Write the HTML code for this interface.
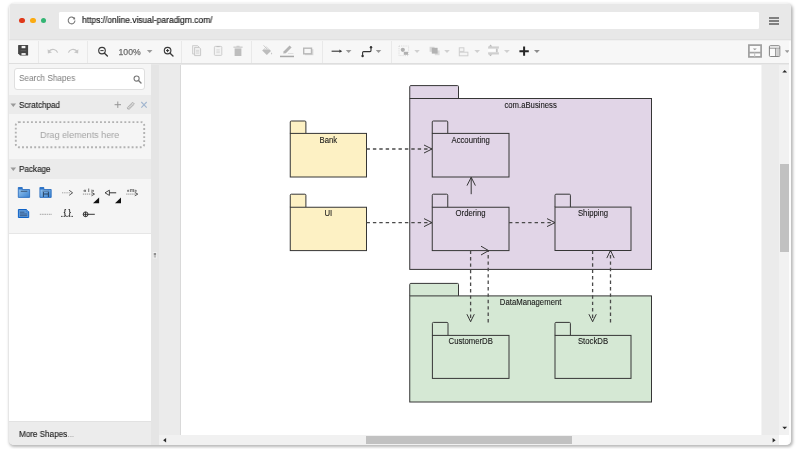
<!DOCTYPE html>
<html><head><meta charset="utf-8"><title>Visual Paradigm Online</title>
<style>
*{box-sizing:border-box;margin:0;padding:0}
html,body{width:800px;height:449px;background:#fff;overflow:hidden;font-family:"Liberation Sans",sans-serif}
.abs{position:absolute}
svg,.cx,.htxt,#urltxt{will-change:transform}
#win{position:absolute;left:8.5px;top:2.5px;width:782px;height:442px;border-radius:5px;background:#e8e8e8;overflow:hidden}
#shadow{position:absolute;left:8.5px;top:2.5px;width:782px;height:442px;border-radius:5px;box-shadow:1.2px 1.6px 3px 0.3px rgba(0,0,0,.28)}
#titlebar{left:0;top:0;width:782px;height:37.8px;background:#e8e8e8;border-top:1.5px solid #f3f3f3;border-left:1.3px solid #f1f1f1;border-bottom:1px solid #e1e1e1}
.dot{position:absolute;width:5.8px;height:5.8px;border-radius:50%;top:15.2px}
#url{left:50.2px;top:9.9px;width:700px;height:16.2px;background:#fff;border-radius:1.2px}
#urltxt{left:73.1px;top:12.8px;font-size:8.95px;line-height:10px;color:#242424;white-space:nowrap;-webkit-text-stroke:.2px #242424;transform:scaleX(.945);transform-origin:0 50%}
#toolbar{left:0;top:37.8px;width:782px;height:24.2px;background:#f7f7f7;border-top:1px solid #f1f1f1;border-bottom:1.8px solid #dedede}
.sep{position:absolute;top:38.8px;width:1px;height:21.4px;background:#e9e9e9}
#sidebar{left:0;top:62px;width:142px;height:381px;background:#fff}
.hdr{position:absolute;left:0;width:142px;background:#ebebeb;font-size:8.1px;color:#1c1c1c;-webkit-text-stroke:.14px #1c1c1c}
.tri{position:absolute;width:0;height:0;border-left:2.9px solid transparent;border-right:2.9px solid transparent;border-top:3.2px solid #969696}
#splitter{left:142px;top:62px;width:8.5px;height:381px;background:#e5e5e5}
#canvas{left:150.5px;top:62px;width:620px;height:371px;background:#ebebeb}
#page{left:171.6px;top:62px;width:582.4px;height:371px;background:#fff;border-left:1.5px solid #d9d9d9;border-right:1.5px solid #f4f4f4}
#vscroll{left:770.5px;top:62px;width:11.5px;height:371px;background:#f1f1f1}
#hscroll{left:150.5px;top:432.4px;width:620px;height:10px;background:#f1f1f1}
#corner{left:770.5px;top:432.4px;width:12px;height:10px;background:#fff}
.thumb{position:absolute;background:#c1c1c1}
.lbl{position:absolute;font-size:7.75px;line-height:9px;color:#1a1a1a;white-space:nowrap;text-align:center;-webkit-text-stroke:.12px #1a1a1a}
.htxt{font-size:8.65px;line-height:10px;color:#1c1c1c;white-space:nowrap;-webkit-text-stroke:.14px #1c1c1c;transform:scaleX(.94);transform-origin:0 50%}
.cx{white-space:nowrap;transform:scaleX(.94);transform-origin:0 50%}
</style></head><body>
<div id="shadow"></div>
<div id="win">
 <div id="titlebar" class="abs"></div>
 <div class="dot" style="left:10.8px;background:#e0391a"></div>
 <div class="dot" style="left:21.5px;background:#fbab12"></div>
 <div class="dot" style="left:32px;background:#33b573"></div>
 <div id="url" class="abs"></div>
 <svg class="abs" style="left:58.5px;top:13.5px" width="9.2" height="9.2" viewBox="0 0 10 10"><path d="M8.3 3.2A3.7 3.7 0 1 0 8.7 5" fill="none" stroke="#757575" stroke-width="1.15"/><path d="M6.3 3.6L8.9 3.8L8.7 1.2Z" fill="#757575"/></svg>
 <div id="urltxt" class="abs">https://online.visual-paradigm.com/</div>
 <div class="abs" style="left:760.4px;top:14.4px;width:10.2px;height:1.9px;background:#808080"></div>
 <div class="abs" style="left:760.4px;top:17.5px;width:10.2px;height:1.9px;background:#808080"></div>
 <div class="abs" style="left:760.4px;top:20.5px;width:10.2px;height:1.9px;background:#808080"></div>

 <div id="toolbar" class="abs"></div>
 <div class="sep" style="left:29.5px"></div>
 <div class="sep" style="left:78.6px"></div>
 <div class="sep" style="left:172.6px"></div>
 <div class="sep" style="left:242.8px"></div>
 <div class="sep" style="left:313.5px"></div>
 <div class="sep" style="left:382px"></div>
 <!--TB_START--><svg class="abs" style="left:-8.5px;top:-2.5px" width="800" height="70" viewBox="0 0 800 70"><path d="M18.1 45.6Q18.1 45.1 18.6 45.1H27.6Q28.1 45.1 28.1 45.6V55Q28.1 55.5 27.6 55.5H20.1L18.1 53.5Z" fill="#454545"/>
<rect x="21.6" y="45.9" width="3.8" height="2.3" fill="#f4f4f4"/><rect x="21.5" y="53.1" width="4.2" height="1.8" fill="#f4f4f4"/><rect x="20.6" y="50" width="5.6" height="1.2" fill="#5a5a5a"/>
<path d="M57.6 52.6C56.6 49.4 52 48 49 51.2" fill="none" stroke="#c6c6c6" stroke-width="1.2"/><path d="M47.6 49.2L47.9 53.4L52 52.6Z" fill="#c6c6c6"/>
<path d="M68.4 52.6C69.4 49.4 74 48 77 51.2" fill="none" stroke="#c6c6c6" stroke-width="1.2"/><path d="M78.4 49.2L78.1 53.4L74 52.6Z" fill="#c6c6c6"/>
<circle cx="102" cy="50.6" r="3.3" fill="none" stroke="#3a3a3a" stroke-width="1.15"/><path d="M104.5 53.2L107.4 56" stroke="#3a3a3a" stroke-width="1.35" stroke-linecap="round"/><path d="M100.4 50.6H103.6" stroke="#333" stroke-width="1"/>
<text x="118.5" y="55.4" font-family="Liberation Sans, sans-serif" font-size="9.7" fill="#6a6a6a" stroke="#6a6a6a" stroke-width=".25" textLength="22.2" lengthAdjust="spacingAndGlyphs">100%</text>
<path d="M146.9 50.1H152.5L149.7 53.1Z" fill="#9a9a9a"/>
<circle cx="167.6" cy="50.6" r="3.3" fill="none" stroke="#3a3a3a" stroke-width="1.15"/><path d="M170.1 53.2L173 56" stroke="#3a3a3a" stroke-width="1.35" stroke-linecap="round"/><path d="M166 50.6H169.2M167.6 49V52.2" stroke="#333" stroke-width="1"/>
<path d="M192.6 45.6H197.6L199 47V54H192.6Z" fill="#f2f2f2" stroke="#c9c9c9" stroke-width=".9"/><path d="M194.6 47.4H199.2L200.6 48.8V55.6H194.6Z" fill="#f0f0f0" stroke="#c4c4c4" stroke-width=".9"/><path d="M196 50.4H199.2M196 51.8H199.2M196 53.2H199.2" stroke="#d0d0d0" stroke-width=".7"/>
<rect x="214.4" y="46.4" width="7.4" height="9" rx=".8" fill="#f3f3f3" stroke="#c9c9c9" stroke-width=".9"/><path d="M216.6 46.6H219.6" stroke="#bdbdbd" stroke-width="1"/><path d="M216.4 49.8H219.8M216.4 51.2H219.8M216.4 52.6H219.8" stroke="#d2d2d2" stroke-width=".7"/>
<rect x="234.6" y="48.4" width="6.8" height="7.6" fill="#bdbdbd"/><rect x="233.4" y="46.6" width="9.2" height="1.1" fill="#c4c4c4"/><rect x="236.4" y="45.8" width="3.2" height="1" fill="#c8c8c8"/>
<path d="M266.6 46.6L271 51L266.8 55L262.2 50.6Z" fill="#bcbcbc"/><path d="M263.6 49.4L266.6 46.6L269.6 49.6Z" fill="#ececec"/><path d="M263.6 45.4L267.4 49.2" stroke="#bcbcbc" stroke-width=".8"/><path d="M271.6 52.2Q272.8 53.8 271.6 54.6Q270.4 53.8 271.6 52.2Z" fill="#bcbcbc"/>
<path d="M283.2 53.4L283.8 51.2L289.6 45.4L291.6 47.4L285.8 53.2Z" fill="#b4b4b4"/><rect x="280" y="55.7" width="14" height="1.5" fill="#a8a8a8"/><rect x="288" y="53.2" width="5.4" height=".7" fill="#d4d4d4"/>
<rect x="304.8" y="49.2" width="8.6" height="6" fill="#d9d9d9"/><rect x="303.7" y="48.2" width="7.8" height="5.6" fill="#f7f7f7" stroke="#b8b8b8" stroke-width="1.4"/>
<path d="M331.6 51.2H339.8" stroke="#333" stroke-width="1.1"/><path d="M339.4 49.6L342.2 51.2L339.4 52.8Z" fill="#333"/>
<path d="M345.8 50.1H351.5L348.65 53.1Z" fill="#9a9a9a"/>
<path d="M362.6 55.6V52.6Q362.6 51.6 363.6 51.6H370Q371 51.6 371 50.6V47.4" fill="none" stroke="#333" stroke-width="1.1"/><circle cx="362.6" cy="56" r="1.2" fill="#333"/><circle cx="371" cy="47.2" r="1.2" fill="#333"/>
<path d="M375.8 50.1H381.3L378.55 53.1Z" fill="#9a9a9a"/>
<rect x="399" y="46" width="9.6" height="9.6" fill="none" stroke="#d4d4d4" stroke-width=".9" stroke-dasharray="1 1.2"/><circle cx="402.8" cy="49.8" r="2.1" fill="#b0b0b0"/><rect x="403.8" y="51.8" width="4.2" height="3" fill="#b0b0b0"/>
<path d="M414.3 50.1H419.8L417.05 53.1Z" fill="#d0d0d0"/>
<rect x="429.6" y="46.8" width="5" height="5" fill="#d8d8d8"/><rect x="434.8" y="50.4" width="4.8" height="4.8" fill="#dcdcdc"/><rect x="431.8" y="47.8" width="5.8" height="5.8" fill="#b2b2b2"/>
<path d="M444.2 50.1H449.8L447.0 53.1Z" fill="#d0d0d0"/>
<rect x="459.3" y="47.8" width="4.6" height="3.6" fill="#f4f4f4" stroke="#cfcfcf" stroke-width="1"/><rect x="459.3" y="52.2" width="8.6" height="3.6" fill="#f4f4f4" stroke="#cfcfcf" stroke-width="1"/>
<path d="M474.4 50.1H480L477.2 53.1Z" fill="#d0d0d0"/>
<rect x="488.1" y="46.4" width="10.8" height="2.2" fill="#cfcfcf"/><rect x="488.1" y="52.3" width="10.8" height="2.2" fill="#cfcfcf"/><rect x="495.9" y="48.6" width="1.8" height="3.7" fill="#c4c4c4"/><rect x="488.1" y="49.5" width="7.4" height="1.9" fill="#fdfdfd"/><path d="M489 46.4L490.6 44.4L492.2 46.4ZM488.8 54.5H492.2L490.5 56.2Z" fill="#b8b8b8"/>
<path d="M504 50.1H509.8L506.9 53.1Z" fill="#d0d0d0"/>
<path d="M519.4 51.2H528.8M524.1 46.6V55.8" stroke="#262626" stroke-width="2"/>
<path d="M534 50.1H539.8L536.9 53.1Z" fill="#8c8c8c"/>
<rect x="748.9" y="45.1" width="12.2" height="11.8" fill="#fbfbfb" stroke="#9e9e9e" stroke-width="1.7"/><path d="M749 52.6H761" stroke="#a4a4a4" stroke-width="1.7"/><path d="M754.7 52.4V57" stroke="#bdbdbd" stroke-width="1"/><path d="M752.8 48.4H756.8L754.8 50.2Z" fill="#9a9a9a"/>
<rect x="769.4" y="45.7" width="10.4" height="10.8" rx="1" fill="#fafafa" stroke="#757575" stroke-width=".9"/><path d="M769.4 48.2H779.8" stroke="#757575" stroke-width=".8"/><path d="M775.6 48.2V56.4" stroke="#757575" stroke-width=".8"/><rect x="776.2" y="48.8" width="3" height="7.2" fill="#cfcfcf"/>
<path d="M784.8 50.2H789.6L787.2 53Z" fill="#9a9a9a"/></svg><!--TB_END-->

 <div id="sidebar" class="abs"></div>
 <!--SIDEBAR_START-->
<div class="abs" id="L" style="left:-8.5px;top:-2.5px;width:800px;height:449px">
 <div class="abs" style="left:8.5px;top:64px;width:142px;height:31px;background:#f5f5f5"></div>
 <div class="abs" style="left:14.4px;top:68.2px;width:130.4px;height:21.6px;background:#fff;border:1px solid #dfdfdf;border-radius:3px"></div>
 <div class="abs cx" style="left:19.4px;top:73.2px;color:#7c7c7c;font-size:8.75px;line-height:10px">Search Shapes</div>
 <svg class="abs" style="left:132.7px;top:74.7px" width="10" height="10" viewBox="0 0 10 10"><circle cx="3.6" cy="3.6" r="2.55" fill="none" stroke="#787878" stroke-width="1.1"/><path d="M5.5 5.5L8 8" stroke="#787878" stroke-width="1.4" stroke-linecap="round"/></svg>

 <div class="abs" style="left:8.5px;top:95px;width:142px;height:19.4px;background:#ebebeb"></div>
 <svg class="abs" style="left:10px;top:102px" width="8" height="6" viewBox="0 0 8 6"><path d="M.5 1.6H6.1L3.3 4.9Z" fill="#9a9a9a"/></svg>
 <div class="abs htxt" style="left:18.8px;top:100.2px">Scratchpad</div>
 <svg class="abs" style="left:113px;top:99px" width="36" height="12" viewBox="0 0 36 12">
  <path d="M1.6 5.7H8M4.8 2.5V8.9" stroke="#969696" stroke-width="1" fill="none"/>
  <path d="M15.2 9.3L14.6 9.9L14.4 8.5L19.6 3.2L21.4 5L16.2 10.2L14.6 9.9" fill="#d6d6d6" stroke="#a8a8a8" stroke-width=".8" stroke-linejoin="round"/>
  <path d="M16 7.6L17.4 9M17.2 6.4L18.6 7.8M18.4 5.2L19.8 6.6" stroke="#aaa" stroke-width=".6"/>
  <path d="M28.3 3L33.7 8.6M33.7 3L28.3 8.6" stroke="#a2b6cf" stroke-width="1.1" fill="none"/>
 </svg>
 <div class="abs" style="left:8.5px;top:114.4px;width:142px;height:44.6px;background:#f5f5f5"></div>
 <svg class="abs" style="left:12px;top:119px" width="136" height="32" viewBox="0 0 136 32"><rect x="3.8" y="3.1" width="128.4" height="25.1" rx="3" fill="none" stroke="#b2b2b2" stroke-width="1.9" stroke-dasharray="1.9 2.16"/></svg>
 <div class="abs cx" style="left:40.1px;top:128.8px;color:#a4a4a4;font-size:9.6px;line-height:11px">Drag elements here</div>

 <div class="abs" style="left:8.5px;top:159px;width:142px;height:19.5px;background:#ebebeb"></div>
 <svg class="abs" style="left:10px;top:165.6px" width="8" height="6" viewBox="0 0 8 6"><path d="M.5 1.6H6.1L3.3 4.9Z" fill="#9a9a9a"/></svg>
 <div class="abs htxt" style="left:19.4px;top:164px">Package</div>
 <div class="abs" style="left:8.5px;top:178.5px;width:142px;height:55.5px;background:#f5f5f5;border-bottom:1.3px solid #e6e6e6"></div>
 <!--PAL_START--><svg class="abs" style="left:0;top:180px" width="160" height="50" viewBox="0 180 160 50"><defs>
<linearGradient id="gb" x1="0" y1="0" x2="1" y2="1"><stop offset="0" stop-color="#9ccaf2"/><stop offset="1" stop-color="#3a82d0"/></linearGradient>
</defs>
<path d="M18.3 187.5H22.2V189.5H29.6V197.4H18.3Z" fill="url(#gb)" stroke="#1f66bd" stroke-width=".8" stroke-linejoin="round"/><rect x="18.3" y="187.4" width="4" height="2.1" fill="#2a72c8"/>
<path d="M20.8 191.3H27.3" stroke="#3d5a7c" stroke-width="1.05"/>
<path d="M39.9 187.5H43.8V189.5H51.2V197.4H39.9Z" fill="url(#gb)" stroke="#1f66bd" stroke-width=".8" stroke-linejoin="round"/><rect x="39.9" y="187.4" width="4" height="2.1" fill="#2a72c8"/>
<path d="M42.6 191.2H49" stroke="#47648a" stroke-width=".8"/><path d="M43.4 192V197M48.4 192V197M43.4 194H48.4" stroke="#2a4666" stroke-width="1" fill="none"/>
<path d="M62 192.8H70" stroke="#9a9a9a" stroke-width=".9" stroke-dasharray="1.3 .9"/><path d="M69.2 190.3L72.6 192.8L69.2 195.3" fill="none" stroke="#444" stroke-width=".9"/>
<text x="89.45" y="192.1" text-anchor="middle" font-family="Liberation Sans, sans-serif" font-size="5.6" font-weight="bold" letter-spacing="1.5" fill="#4a4a4a">«i»</text><path d="M82.9 194.1H92.5" stroke="#8a8a8a" stroke-width=".9" stroke-dasharray="1.3 .7"/><path d="M91.5 192.4L94.5 194.1L91.5 195.8" fill="none" stroke="#444" stroke-width=".9"/>
<path d="M99.1 197.6V203.2H93Z" fill="#111"/>
<path d="M109.4 190.2V195.4L105 192.8Z" fill="#fafafa" stroke="#333" stroke-width=".9"/><path d="M109.4 192.8H116.2" stroke="#333" stroke-width="1"/>
<path d="M121 197.6V203.2H115Z" fill="#111"/>
<text x="132.15" y="192.3" text-anchor="middle" font-family="Liberation Sans, sans-serif" font-size="4.6" font-weight="bold" letter-spacing="0.3" fill="#4a4a4a">«m»</text><path d="M126.2 194.1H135.8" stroke="#8a8a8a" stroke-width=".9" stroke-dasharray="1.3 .7"/><path d="M134.8 192.4L137.8 194.1L134.8 195.8" fill="none" stroke="#444" stroke-width=".9"/>
<path d="M18.4 209.5H26.4L28.7 211.7V217.5H18.4Z" fill="#5b97d8" stroke="#0f62c6" stroke-width="1" stroke-linejoin="round"/><path d="M26.4 209.5V211.7H28.7" fill="#a8ccf0" stroke="#0f62c6" stroke-width=".6"/><path d="M20 212.2H24.4M20 214H27.2M20 215.7H27.2" stroke="#3c5f8c" stroke-width="1"/>
<path d="M39.8 214.3H52" stroke="#a6a6a6" stroke-width="1" stroke-dasharray="1.6 .7"/>
<text x="68.6" y="213.9" text-anchor="middle" font-family="Liberation Sans, sans-serif" font-size="7" fill="#222" stroke="#222" stroke-width=".25" letter-spacing="2.6">{}</text><path d="M61 216.4H73.8" stroke="#333" stroke-width=".9" stroke-dasharray="1.6 1"/>
<circle cx="85.6" cy="214.3" r="2.4" fill="none" stroke="#222" stroke-width=".9"/><path d="M83.2 214.3H94.8M85.6 211.9V216.7" stroke="#222" stroke-width=".9"/></svg><!--PAL_END-->
 <div class="abs" style="left:8.5px;top:421px;width:142px;height:24px;background:#ececec;border-top:1.2px solid #e2e2e2"></div>
 <div class="abs htxt" style="left:18.8px;top:429.4px">More Shapes<span style="color:#999;-webkit-text-stroke:0">...</span></div>
</div>
<!--SIDEBAR_END-->
 <div id="splitter" class="abs"></div>
 <div id="canvas" class="abs"></div>
 <div id="page" class="abs"></div>
 <!--DIAGRAM_START--><svg class="abs" style="left:-8.5px;top:-2.5px" width="800" height="449" viewBox="0 0 800 449"><style>.dl{font-family:"Liberation Sans",sans-serif;font-size:8.2px;fill:#1a1a1a;stroke:#1a1a1a;stroke-width:.1px}</style>
<path d="M409.75 98.5V86.6Q409.75 85.6 410.75 85.6H457.5Q458.5 85.6 458.5 86.6V98.5" fill="#e1d5e7" stroke="#363636" stroke-width="1"/>
<rect x="409.75" y="98.5" width="241.75" height="170.89999999999998" fill="#e1d5e7" stroke="#363636" stroke-width="1"/>
<text transform="translate(530.62 108.20) scale(.945 1)" text-anchor="middle" class="dl">com.aBusiness</text>
<path d="M409.75 295.9V284.4Q409.75 283.4 410.75 283.4H457.5Q458.5 283.4 458.5 284.4V295.9" fill="#d5e8d4" stroke="#363636" stroke-width="1"/>
<rect x="409.75" y="295.9" width="241.75" height="106.10000000000002" fill="#d5e8d4" stroke="#363636" stroke-width="1"/>
<text transform="translate(530.62 304.80) scale(.945 1)" text-anchor="middle" class="dl">DataManagement</text>
<path d="M290.25 133.4V122Q290.25 121 291.25 121H304.9Q305.9 121 305.9 122V133.4" fill="#fdf1c4" stroke="#363636" stroke-width="1"/>
<rect x="290.25" y="133.4" width="76.25" height="43.599999999999994" fill="#fdf1c4" stroke="#363636" stroke-width="1"/>
<text transform="translate(328.38 143.10) scale(.945 1)" text-anchor="middle" class="dl">Bank</text>
<path d="M290.25 207.25V195.2Q290.25 194.2 291.25 194.2H304.9Q305.9 194.2 305.9 195.2V207.25" fill="#fdf1c4" stroke="#363636" stroke-width="1"/>
<rect x="290.25" y="207.25" width="76.25" height="43.349999999999994" fill="#fdf1c4" stroke="#363636" stroke-width="1"/>
<text transform="translate(328.38 215.95) scale(.945 1)" text-anchor="middle" class="dl">UI</text>
<path d="M432.25 133.4V122Q432.25 121 433.25 121H446.75Q447.75 121 447.75 122V133.4" fill="#e1d5e7" stroke="#363636" stroke-width="1"/>
<rect x="432.25" y="133.4" width="76.75" height="43.599999999999994" fill="#e1d5e7" stroke="#363636" stroke-width="1"/>
<text transform="translate(470.62 143.10) scale(.945 1)" text-anchor="middle" class="dl">Accounting</text>
<path d="M432.25 207.25V195.2Q432.25 194.2 433.25 194.2H446.75Q447.75 194.2 447.75 195.2V207.25" fill="#e1d5e7" stroke="#363636" stroke-width="1"/>
<rect x="432.25" y="207.25" width="76.75" height="43.349999999999994" fill="#e1d5e7" stroke="#363636" stroke-width="1"/>
<text transform="translate(470.62 216.15) scale(.945 1)" text-anchor="middle" class="dl">Ordering</text>
<path d="M555 207.1V195.2Q555 194.2 556 194.2H569.4Q570.4 194.2 570.4 195.2V207.1" fill="#e1d5e7" stroke="#363636" stroke-width="1"/>
<rect x="555" y="207.1" width="76" height="43.400000000000006" fill="#e1d5e7" stroke="#363636" stroke-width="1"/>
<text transform="translate(593.00 216.00) scale(.945 1)" text-anchor="middle" class="dl">Shipping</text>
<path d="M432.4 335.4V323.4Q432.4 322.4 433.4 322.4H447Q448 322.4 448 323.4V335.4" fill="#d5e8d4" stroke="#363636" stroke-width="1"/>
<rect x="432.4" y="335.4" width="76.60000000000002" height="43.0" fill="#d5e8d4" stroke="#363636" stroke-width="1"/>
<text transform="translate(470.70 344.40) scale(.945 1)" text-anchor="middle" class="dl">CustomerDB</text>
<path d="M555 335.4V323.4Q555 322.4 556 322.4H569.4Q570.4 322.4 570.4 323.4V335.4" fill="#d5e8d4" stroke="#363636" stroke-width="1"/>
<rect x="555" y="335.4" width="76" height="43.0" fill="#d5e8d4" stroke="#363636" stroke-width="1"/>
<text transform="translate(593.00 344.40) scale(.945 1)" text-anchor="middle" class="dl">StockDB</text>
<path d="M366.5 149L432 149" fill="none" stroke="#4a4a4a" stroke-width="1.3" stroke-dasharray="3.4 3"/>
<path d="M424.00 153.00L432 149L424.00 145.00" fill="none" stroke="#363636" stroke-width="1"/>
<path d="M366.5 222.6L432 222.6" fill="none" stroke="#4a4a4a" stroke-width="1.3" stroke-dasharray="3.4 3"/>
<path d="M424.00 226.60L432 222.6L424.00 218.60" fill="none" stroke="#363636" stroke-width="1"/>
<path d="M509 222.6L555 222.6" fill="none" stroke="#4a4a4a" stroke-width="1.3" stroke-dasharray="3.4 3"/>
<path d="M547.00 226.60L555 222.6L547.00 218.60" fill="none" stroke="#363636" stroke-width="1"/>
<path d="M471.2 194.2L471.2 177.3" fill="none" stroke="#363636" stroke-width="1" />
<path d="M475.40 185.60L471.2 177.3L467.00 185.60" fill="none" stroke="#363636" stroke-width="1"/>
<path d="M470.6 250.6L470.6 321.6" fill="none" stroke="#4a4a4a" stroke-width="1.3" stroke-dasharray="3.4 3"/>
<path d="M466.90 314.20L470.6 321.6L474.30 314.20" fill="none" stroke="#363636" stroke-width="1"/>
<path d="M488.2 322.4L488.2 250.6" fill="none" stroke="#4a4a4a" stroke-width="1.3" stroke-dasharray="3.4 3"/>
<path d="M481.00 255.00L488.6 250.6L481.00 246.20" fill="none" stroke="#363636" stroke-width="1"/>
<path d="M592.6 250.5L592.6 321.6" fill="none" stroke="#4a4a4a" stroke-width="1.3" stroke-dasharray="3.4 3"/>
<path d="M588.90 314.20L592.6 321.6L596.30 314.20" fill="none" stroke="#363636" stroke-width="1"/>
<path d="M610.5 322.4L610.5 250.5" fill="none" stroke="#4a4a4a" stroke-width="1.3" stroke-dasharray="3.4 3"/>
<path d="M614.20 258.10L610.5 250.5L606.80 258.10" fill="none" stroke="#363636" stroke-width="1"/>
</svg><!--DIAGRAM_END-->
 <div id="vscroll" class="abs"></div>
 <div id="hscroll" class="abs"></div>
 <div id="corner" class="abs"></div>
 <div class="thumb" style="left:771.8px;top:161.5px;width:8.6px;height:87.7px"></div>
 <div class="abs" style="left:780.6px;top:38px;width:1.6px;height:404px;background:#fcfcfc"></div>
 <div class="thumb" style="left:357.5px;top:433.6px;width:205.5px;height:8px"></div>
 <!--SA_START--><svg class="abs" style="left:-8.5px;top:-2.5px;pointer-events:none" width="800" height="449" viewBox="0 0 800 449">
<path d="M782.3 72.6L784.7 70L787.1 72.6Z" fill="#2a2a2a"/>
<path d="M782.3 426.7L784.7 429.3L787.1 426.7Z" fill="#2a2a2a"/>
<path d="M166.1 438L163.1 440.3L166.1 442.6Z" fill="#2a2a2a"/>
<path d="M772.6 438L775.6 440.3L772.6 442.6Z" fill="#2a2a2a"/>
<rect x="152.9" y="252.2" width="4" height="6.2" fill="#f4f4f4"/>
<rect x="153.7" y="253" width="2.4" height="2.2" fill="#8e8e8e"/>
<rect x="153.7" y="255.2" width="2.4" height="2.4" fill="#bcbcbc"/>
</svg><!--SA_END-->
</div>
</body></html>
